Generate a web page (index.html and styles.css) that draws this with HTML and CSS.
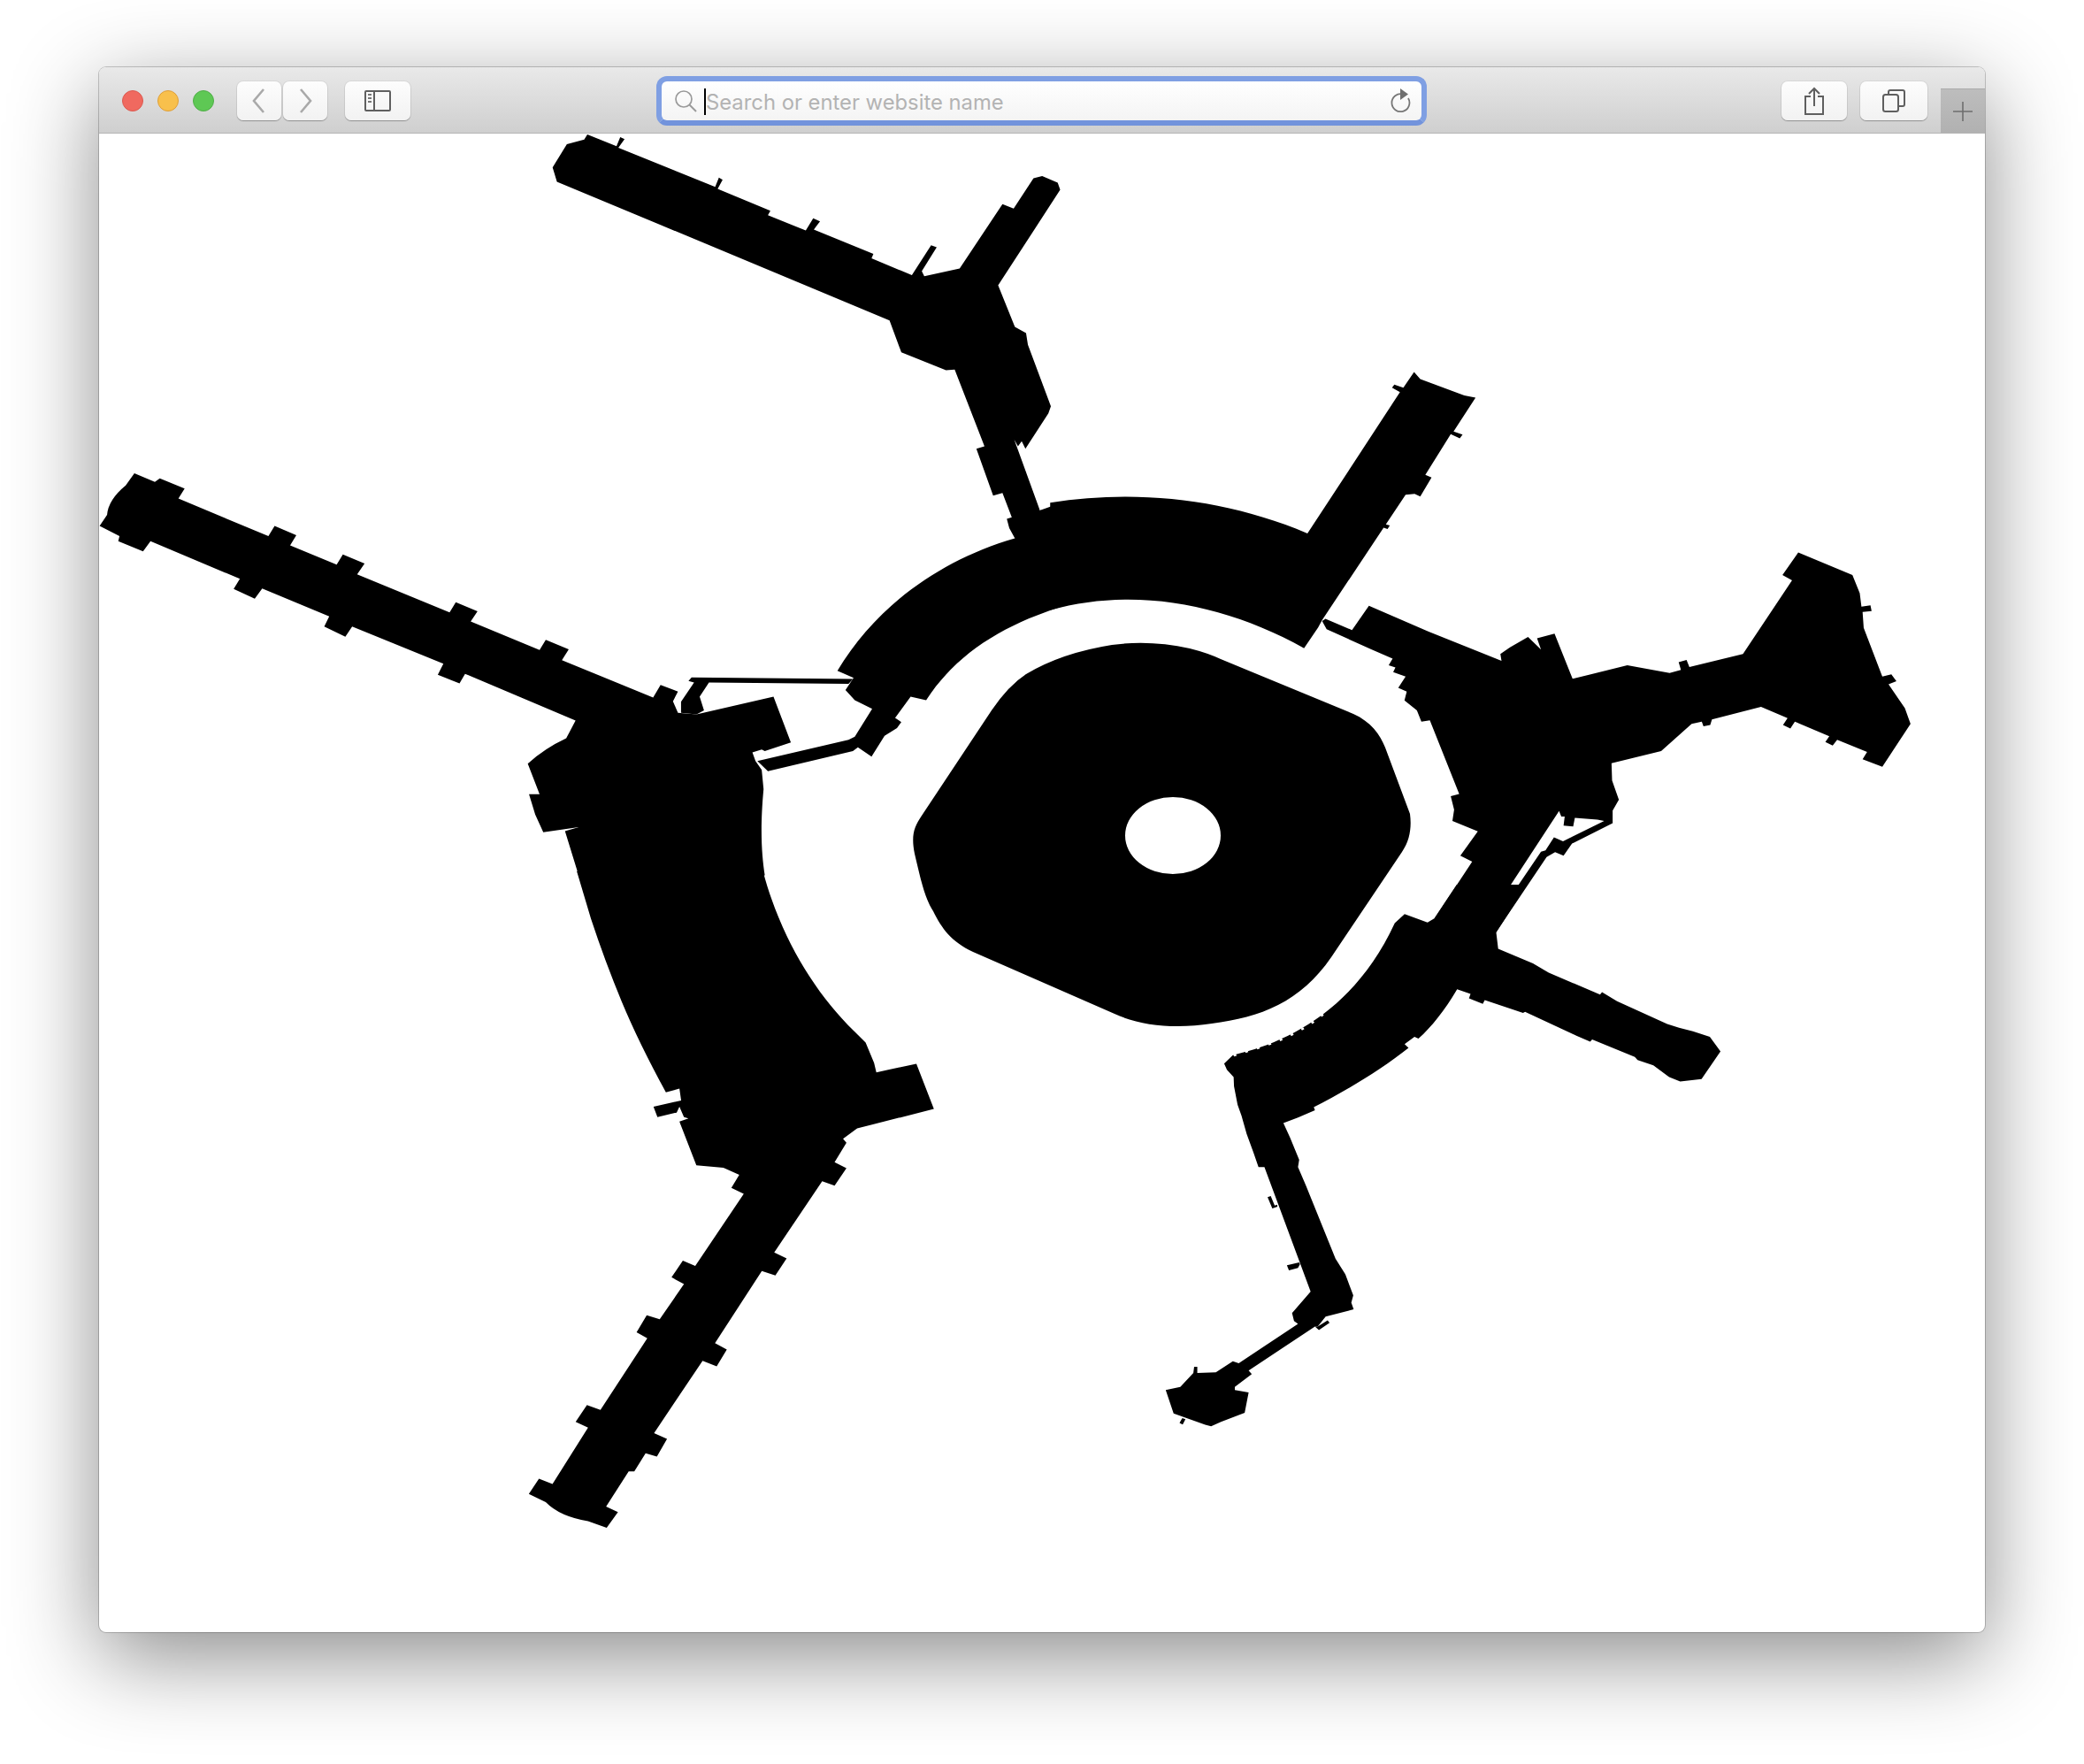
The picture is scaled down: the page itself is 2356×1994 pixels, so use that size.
FILE: index.html
```html
<!DOCTYPE html>
<html lang="en">
<head>
<meta charset="utf-8">
<title>Safari window</title>
<link rel="stylesheet" href="styles.css">
</head>
<body>
<main class="window">
  <header class="toolbar">
    <div class="lights">
      <span class="light light-red"></span>
      <span class="light light-yellow"></span>
      <span class="light light-green"></span>
    </div>
    <div class="nav">
      <button class="btn btn-nav" aria-label="Back"><svg class="icon" width="18" height="30" viewBox="0 0 18 30"><path d="M14 2 3 15l11 13" fill="none" stroke="#a9a9a9" stroke-width="2.6"/></svg></button>
      <button class="btn btn-nav" aria-label="Forward"><svg class="icon" width="18" height="30" viewBox="0 0 18 30"><path d="M4 2l11 13L4 28" fill="none" stroke="#a9a9a9" stroke-width="2.6"/></svg></button>
    </div>
    <button class="btn btn-sidebar" aria-label="Sidebar"><svg class="icon" width="30" height="24" viewBox="0 0 30 24"><rect x="1" y="1" width="28" height="22" rx="1" fill="none" stroke="#5f5f5f" stroke-width="2"/><path d="M11 1v22" stroke="#5f5f5f" stroke-width="2"/><path d="M4 5h4M4 9h4M4 13h4" stroke="#777" stroke-width="2"/></svg></button>
    <div class="search">
      <svg class="search-icon" width="26" height="26" viewBox="0 0 26 26"><circle cx="11" cy="11" r="9" fill="none" stroke="#9a9a9a" stroke-width="1.7"/><path d="M17.5 17.5 25 25" stroke="#9a9a9a" stroke-width="2"/></svg>
      <span class="caret"></span>
      <span class="placeholder">Search or enter website name</span>
      <svg class="reload" width="24" height="28" viewBox="0 0 24 28"><path d="M15 6.5A10 10 0 1 0 21 11" fill="none" stroke="#777" stroke-width="1.8"/><path d="M12 0l9 6.5-9 6.5z" fill="#6f6f6f"/></svg>
    </div>
    <button class="btn btn-share" aria-label="Share"><svg class="icon" width="24" height="32" viewBox="0 0 24 32"><path d="M8 11H2v20h20V11h-6" fill="none" stroke="#5f5f5f" stroke-width="2"/><path d="M12 2v20M6 8l6-6 6 6" fill="none" stroke="#5f5f5f" stroke-width="2"/></svg></button>
    <button class="btn btn-tabs" aria-label="Tabs"><svg class="icon" width="26" height="26" viewBox="0 0 26 26"><rect x="1" y="6" width="17" height="19" rx="2.5" fill="none" stroke="#5f5f5f" stroke-width="2"/><path d="M7 6V3a2 2 0 0 1 2-2h14a2 2 0 0 1 2 2v14a2 2 0 0 1-2 2h-5" fill="none" stroke="#5f5f5f" stroke-width="2"/></svg></button>
    <div class="new-tab"><svg width="24" height="24" viewBox="0 0 24 24"><path d="M12 1v22M1 12h22" stroke="#6e6e6e" stroke-width="1.6"/></svg></div>
  </header>
  <section class="content">
    <svg class="map" width="2132" height="1694" viewBox="112 151 2132 1694">
      <!-- crop A: top-left quadrant -->
      <g transform="translate(100 140) scale(.7015 .574)">
        <polygon points="748,86 771,40 799,31 804,21 851,44 857,26 864,30 854,47 1010,124 1016,106 1022,110 1014,128 1099,171 1095,180 1156,210 1168,186 1179,192 1169,208 1265,256 1262,265 1327,298 1358,239 1367,243 1343,290 1347,300 1404,285 1473,158 1491,167 1523,107 1537,103 1562,116 1566,130 1466,318 1493,400 1511,412 1514,435 1551,556 1547,570 1510,640 1504,625 1498,635 1492,622 1533,760 1493,816 1484,796 1480,778 1488,775 1473,727 1458,732 1431,640 1444,635 1396,484 1382,485 1310,450 1291,387 755,114"/>
        <path d="M1207 1077C1270 950 1370 860 1493 816L1500 770 1536 760 1570 745V951H1568C1480 985 1400 1040 1350 1135L1325 1128 1300 1170 1310 1178 1303 1190 1283 1205 1262 1246 1240 1228 1232 1235 1095 1275 1078 1255 1225 1213 1235 1207 1263 1152 1235 1135 1220 1115 1233 1091Z"/>
        <polygon points="972,1090 1232,1093 1225,1103 1000,1100 985,1128 992,1155 980,1163 955,1160 955,1138 976,1100 967,1097"/>
        <path d="M18 792 30 770Q32 740 60 712L74 688 107 705 115 698 155 718 145 738 290 812 300 792 335 810 325 830 400 868 410 848 445 866 433 887 582 962 592 942 627 960 616 980 727 1036 737 1016 774 1035 763 1056 910 1130 922 1105 950 1118 942 1137 950 1160 980 1163 1104 1128 1132 1218 1090 1235 1085 1232 1070 1238 1075 1255 1085 1272 1088 1310C1082 1390 1085 1440 1090 1480H790L768 1393 790 1385 733 1395 720 1360 710 1320 727 1320 708 1260Q735 1230 770 1210L785 1175 607 1083 598 1102 563 1085 572 1063 425 990 414 1010 380 990 388 970 280 915 268 935 234 916 244 896 100 822 88 842 48 822 50 812Z"/>
      </g>
      <!-- crop B: south-west pier -->
      <g transform="translate(550 1000) scale(.6378 .5102)">
        <path d="M160 -30 185 75Q210 170 240 260T318 460L342 452 345 478 296 492 303 515 337 505 342 492 350 515 358 518 342 525 372 622 420 627 448 643 434 672 456 685 370 845 348 833 328 870 350 885 307 963 284 954 266 992 285 1005 202 1164 178 1153 158 1190 180 1203 117 1328 93 1316 75 1350 105 1368Q130 1400 180 1410L213 1425 233 1390 212 1378 252 1300 262 1300 282 1260 302 1267 320 1228 297 1215 383 1055 408 1067 426 1030 405 1016 488 856 512 866 532 828 510 815 595 657 617 667 638 628 617 615 638 572 632 563 657 540 793 497 762 397 712 410 691 416 687 395 672 350 640 310C575 225 520 110 490 -30Z"/>
      </g>
      <!-- crop C: north arc, north-east pier and east hub -->
      <g transform="translate(1200 400) scale(.6378 .5102)">
        <path d="M-20 330C130 300 290 320 436 398L600 85 586 75 590 68 606 75 625 40 636 56 714 92 734 97 695 172 711 179 706 187 690 178 645 268 656 274 636 316 626 310 610 312 575 378 582 380 578 388 571 385 462 590 455 606 430 652C290 555 130 515-20 568Z"/>
        <polygon points="462,592 468,587 515,612 545,558 650,615 740,660 780,680 778,665 795,650 827,627 850,655 843,630 874,620 906,720 1003,690 1078,707 1098,700 1094,683 1108,678 1113,694 1208,665 1295,502 1278,490 1306,440 1402,490 1415,530 1418,560 1434,557 1436,570 1420,572 1422,607 1455,715 1471,710 1480,725 1466,732 1495,785 1505,820 1455,915 1420,898 1428,882 1375,855 1367,868 1354,860 1361,847 1300,815 1292,830 1279,822 1287,807 1240,782 1153,810 1150,822 1138,825 1135,815 1117,820 1063,880 975,907 976,945 988,988 977,1012 977,1040 905,1085 890,1112 875,1104 860,1115 770,1282 662,1250 728,1125 707,1112 738,1058 693,1035 696,1010 690,980 705,975 653,812 638,815 630,790 608,768 612,748 597,740 610,715 588,705 592,695 580,690 587,675 550,655 470,610"/>
        <polygon class="slot" points="882,1013 793,1183 804,1188 850,1103 858,1100 873,1071 889,1080 962,1035 950,1032 910,1028 907,1047 890,1045 892,1025 886,1025"/>
      </g>
      <!-- crop D: south-east pier, south arc and south pier -->
      <g transform="translate(1300 1000) scale(.4464 .4145)">
        <path d="M645 80 703 103 720 92 777 0H955L877 130 882 175 970 215 1010 240 1140 300 1145 293 1183 318 1310 380 1340 390 1375 400 1418 415 1445 455 1397 530 1343 537 1315 525 1275 493 1235 478 1228 470 1120 422 1115 428 1080 412 950 347 945 350 910 337 848 315 843 325 808 310 812 298 778 285C745 345 715 385 680 420L670 415 645 435 655 445C585 505 500 560 415 607L418 615 375 635 338 650 355 690 378 750 375 770 395 820 470 1020 495 1063 515 1120 510 1140 516 1158 445 1178 425 1205 418 1205 250 1325 258 1335 215 1370 215 1378 250 1385 240 1440 180 1465 155 1477 140 1473 60 1442 40 1378 77 1370 110 1332 112 1315 120 1315 120 1332 167 1330 210 1300 225 1305 375 1198 365 1190 360 1168 407 1110 290 770 275 770 262 730 245 680 232 630 222 600 213 550 212 525 195 505 188 488 210 465 235 458C350 425 520 340 620 105Z"/>
        <path class="bites" d="M212 466 235 458C330 430 395 395 440 352"/>
        <polygon points="298,852 306,849 316,875 322,873 323,878 310,883"/>
        <polygon points="347,1038 378,1030 380,1035 375,1045 352,1052"/>
        <polygon points="418,1205 428,1215 455,1195 450,1188 425,1205"/>
        <polygon points="75,1468 82,1455 90,1458 83,1472"/>
      </g>
      <!-- central island -->
      <path class="island" fill-rule="evenodd" d="M1121 803Q1140 775 1160 762 1200 738 1257 729 1300 723 1345 733 1365 738 1380 745L1530 807C1550 816 1560 830 1566 845L1594 920C1596 935 1594 950 1585 963L1505 1082C1470 1133 1425 1150 1370 1157 1330 1163 1290 1160 1260 1146L1100 1076C1075 1064 1065 1050 1055 1030 1045 1015 1040 990 1034 965 1030 945 1033 935 1042 922ZM1272 944.5a54 43.5 0 1 0 108 0a54 43.5 0 1 0-108 0Z"/>
    </svg>
  </section>
</main>
</body>
</html>
```
FILE: styles.css
```css
html, body {
  margin: 0;
  padding: 0;
  background: #fff;
}
body {
  height: 1994px;
  overflow: hidden;
  padding: 76px 112px 0;
  box-sizing: border-box;
}
.window {
  width: 2132px;
  height: 1769px;
  border-radius: 8px;
  overflow: hidden;
  display: flex;
  flex-direction: column;
  background: #fff;
  box-shadow: 0 0 0 1px rgba(0,0,0,.2), 0 28px 100px rgba(0,0,0,.46);
}
.toolbar {
  height: 75px;
  box-sizing: border-box;
  flex: none;
  display: flex;
  align-items: center;
  padding: 2px 0 0 26px;
  background: linear-gradient(#e9e9e9, #cfcfcf);
  border-bottom: 1px solid #b4b4b4;
}
.lights {
  display: flex;
  gap: 16px;
}
.light {
  width: 24px;
  height: 24px;
  border-radius: 50%;
  box-sizing: border-box;
}
.light-red { background: #f0695f; border: 1px solid #dc5a50; }
.light-yellow { background: #f8c04c; border: 1px solid #df9f3a; }
.light-green { background: #5ec854; border: 1px solid #50ae48; }
.nav {
  display: flex;
  gap: 2px;
  margin-left: 26px;
}
.btn {
  height: 44px;
  padding: 0;
  border: 0;
  border-radius: 7px;
  background: linear-gradient(#fdfdfd, #f2f2f2);
  box-shadow: 0 1px 1px rgba(0,0,0,.28), 0 0 0 1px rgba(0,0,0,.05);
  display: flex;
  align-items: center;
  justify-content: center;
}
.btn-nav { width: 50px; }
.btn-sidebar { width: 74px; margin-left: 20px; }
.btn-share { width: 74px; margin-left: 401px; }
.btn-tabs { width: 76px; margin-left: 15px; }
.search {
  width: 871px;
  height: 56px;
  margin-left: 278px;
  box-sizing: border-box;
  border: 6px solid #7f9fe3;
  border-bottom-color: #7293dc;
  border-radius: 12px;
  background: linear-gradient(#fff, #f4f4f4);
  display: flex;
  align-items: center;
  padding: 0 12px 0 14px;
}
.search-icon { flex: none; }
.caret {
  width: 2px;
  height: 30px;
  margin: 2px 0 0 8px;
  background: #000;
  flex: none;
}
.placeholder {
  font: 23.8px Inter, "Liberation Sans", Arial, sans-serif;
  color: #b3b3b3;
  line-height: 30px;
  margin-top: 3px;
  white-space: nowrap;
  flex: 1;
}
.reload { flex: none; }
.new-tab {
  width: 50px;
  height: 50px;
  margin-left: 15px;
  align-self: flex-end;
  background: linear-gradient(#bdbdbd, #b1b1b1);
  border-top: 1px solid #aaa;
  box-sizing: border-box;
  display: flex;
  align-items: center;
  justify-content: center;
}
.content {
  flex: 1;
  min-height: 0;
}
.map {
  display: block;
  fill: #000;
}
.slot { fill: #fff; }
.island { fill: #000; }
.bites {
  fill: none;
  stroke: #fff;
  stroke-width: 6;
  stroke-dasharray: 7 24;
}
```
